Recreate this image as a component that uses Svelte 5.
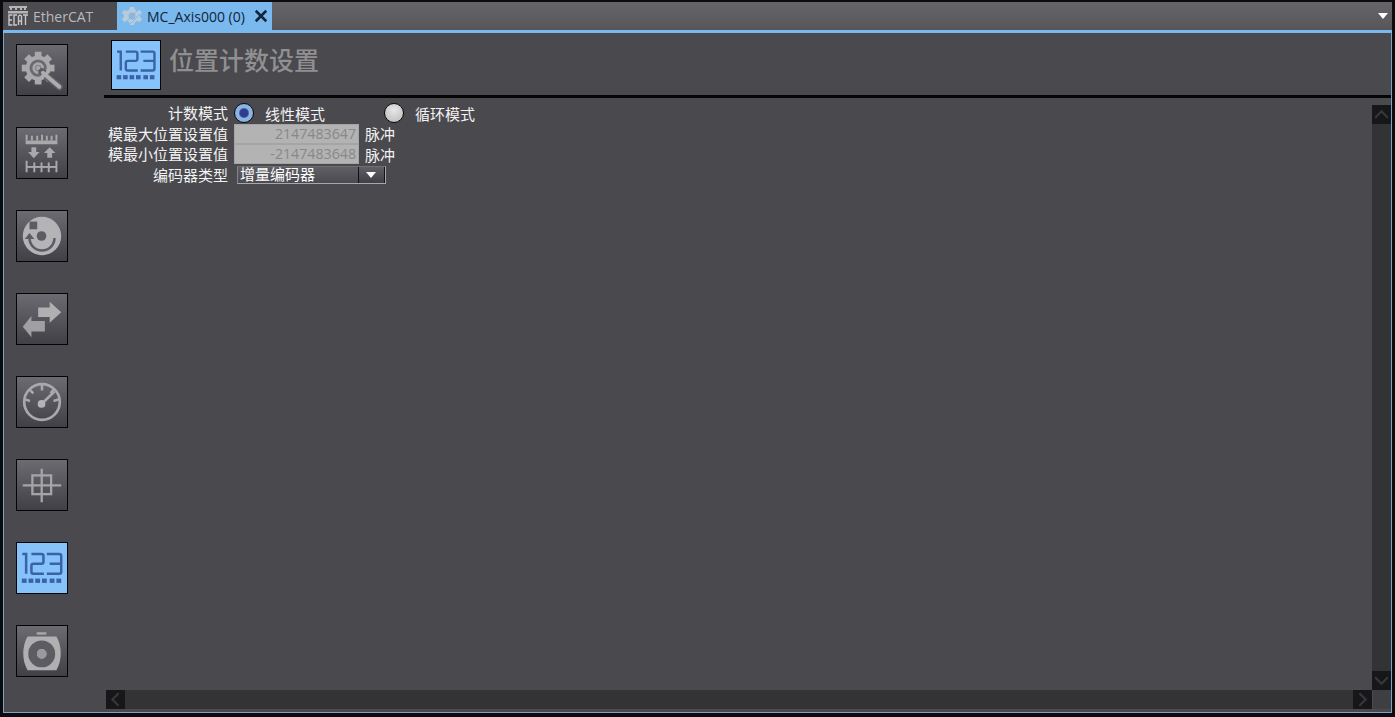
<script>
	const navItems = ['gear', 'scale', 'home', 'arrows', 'gauge', 'cross', 'count', 'knob'];
	const gearTeeth = [0, 45, 90, 135, 180, 225, 270, 315];
	let activeNav = $state('count');
	let countMode = $state('linear');
</script>

{#snippet countIcon()}
	<svg viewBox="0 0 52 52" class="nav-svg" aria-hidden="true">
		<g fill="none" stroke="#3a62a8" stroke-width="2.600">
			<path d="M5.500 11.500h4v20.500" />
			<path d="M15 11.500h10.500q2 0 2 2v6q0 2-2 2H17q-2 0-2 2v6.500q0 2 2 2h11" />
			<path d="M31 11.500h13q2 0 2 2v16.500q0 2-2 2H31M34 21.500h12" />
		</g>
		<g fill="#3a62a8">
			{#each [5, 12, 19, 26, 34, 41] as x}
				<rect {x} y="37" width="5" height="4.500" />
			{/each}
		</g>
	</svg>
{/snippet}

{#snippet navIcon(name)}
	{#if name === 'gear'}
		<svg viewBox="0 0 52 52" class="nav-svg" aria-hidden="true">
			<g fill="#a9a9ac">
				{#each gearTeeth as angle}
					<rect x="18.500" y="7" width="7" height="8" transform="rotate({angle} 22 24)" />
				{/each}
				<circle cx="22" cy="24" r="13" />
			</g>
			<circle cx="22" cy="24" r="7.500" fill="none" stroke="#6a6a72" stroke-width="3" />
			<circle cx="22" cy="24" r="2.800" fill="none" stroke="#85858a" stroke-width="1.400" />
			<path d="M26 28l18 15.500" stroke="#5c5c62" stroke-width="7.500" stroke-linecap="round" />
			<path d="M27 29l17 14.500" stroke="#adadb0" stroke-width="4.200" stroke-linecap="round" />
			<path d="M24.500 33a8 8 0 0 0 8-8" fill="none" stroke="#adadb0" stroke-width="3.200" />
		</svg>
	{:else if name === 'scale'}
		<svg viewBox="0 0 52 52" class="nav-svg" aria-hidden="true">
			<path fill="#a9a9ac" d="M9 13h33v4H9z" />
			<g stroke="#a9a9ac" stroke-width="2">
				<path d="M10 7v6M15.500 8v5M21 8v5M26 7v6M31 8v5M36 8v5M41 7v6" />
				<path d="M10 34v12M41 34v12M18 36v10M25.500 36v10M33 36v10" />
				<path d="M10 40.500h31" />
			</g>
			<path fill="#a9a9ac" d="M15 20h5v5h3.500l-6 6.500-6-6.500H15z" />
			<path fill="#a9a9ac" d="M31.500 31h5v-5h3.500l-6-6-6 6h3.500z" />
		</svg>
	{:else if name === 'home'}
		<svg viewBox="0 0 52 52" class="nav-svg" aria-hidden="true">
			<circle cx="26" cy="26" r="20" fill="#b4b4b7" />
			<rect x="13" y="11" width="8" height="8" fill="#5c5c62" />
			<circle cx="25.500" cy="26" r="5" fill="#5c5c62" />
			<path d="M13 28a13 13 0 0 0 26 0" fill="none" stroke="#5c5c62" stroke-width="2.600" />
			<path d="M8 29l5-6 5 6z" fill="#5c5c62" />
		</svg>
	{:else if name === 'arrows'}
		<svg viewBox="0 0 52 52" class="nav-svg" aria-hidden="true">
			<path fill="#b0b0b3" d="M22 14h12V8l12 11-12 11v-6H22z" />
			<path fill="#a0a0a3" d="M29 28H15v-5L6 34l9 11v-6h14z" />
		</svg>
	{:else if name === 'gauge'}
		<svg viewBox="0 0 52 52" class="nav-svg" aria-hidden="true">
			<circle cx="26" cy="26" r="18.500" fill="none" stroke="#a9a9ac" stroke-width="2.800" />
			<path d="M26 8v6M13 13l4 4M7.500 23l6 2M38 13l-3 4M44 23l-6 2" stroke="#a9a9ac" stroke-width="2.600" />
			<path d="M25.500 28L39 15" stroke="#a9a9ac" stroke-width="2.800" />
			<circle cx="25.500" cy="28" r="4" fill="#b4b4b7" />
		</svg>
	{:else if name === 'cross'}
		<svg viewBox="0 0 52 52" class="nav-svg" aria-hidden="true">
			<g fill="none" stroke="#a5a5a8" stroke-width="2.400">
				<rect x="16" y="16" width="19.500" height="19.500" />
				<path d="M6 26.300h40M25.700 9v35" />
			</g>
		</svg>
	{:else if name === 'knob'}
		<svg viewBox="0 0 52 52" class="nav-svg" aria-hidden="true">
			<rect x="20.500" y="6.500" width="10" height="2.500" fill="#a9a9ac" />
			<path fill="#b0b0b3" d="M11 11h30c6 10 6 25 0 35H11C5 36 5 21 11 11z" />
			<circle cx="25.700" cy="29" r="9.500" fill="none" stroke="#5c5c62" stroke-width="9" />
			<circle cx="25.700" cy="29" r="5" fill="#9a9a9d" />
		</svg>
	{/if}
{/snippet}

<div class="window">
	<div class="tabbar">
		<div class="tab">
			<svg viewBox="0 0 22 22" class="tab-icon" aria-hidden="true">
				<g fill="#b5b5b5">
					<rect x="2" y="1" width="18" height="2" />
					<path d="M3 3h2v2H3zM8 3h2v2H8zM13 3h2v2h-2zM17 3h2v2h-2z" />
					<rect x="1" y="6" width="20" height="2.500" />
				</g>
				<g fill="none" stroke="#c8c8c8" stroke-width="1.400">
					<path d="M5.500 10H2v10h3.500M2 15h3" />
					<path d="M10 10H7v10h3" />
					<path d="M11.500 20v-9l1.500-1 1.500 1v9M11.500 16h3" />
					<path d="M16 10h5M18.500 10v10" />
				</g>
			</svg>
			<span>EtherCAT</span>
		</div>
		<div class="tab tab-active">
			<svg viewBox="0 0 22 22" class="tab-icon" aria-hidden="true">
				<path fill="#b9cbdb" d="M9 2h4l1 3 2 1 3-1 2 3-2 2v2l2 2-2 3-3-1-2 1-1 3H9l-1-3-2-1-3 1-2-3 2-2v-2L1 8l2-3 3 1 2-1z" />
				<circle cx="11" cy="11" r="3.500" fill="#8fb6d8" />
				<path d="M5 17L17 5M9 19L19 9" stroke="#79b9ee" stroke-width="1" />
			</svg>
			<span>MC_Axis000 (0)</span>
			<button class="tab-close" aria-label="关闭">
				<svg viewBox="0 0 12 12" aria-hidden="true"><path d="M1.500 1.500l9 9M10.500 1.500l-9 9" stroke="#10243a" stroke-width="2.200" /></svg>
			</button>
		</div>
		<div class="tab-fill">
			<span class="tab-menu"></span>
		</div>
	</div>

	<div class="body">
		<nav class="sidebar">
			{#each navItems as item}
				<button class="nav-btn" class:active={activeNav === item} onclick={() => (activeNav = item)} aria-label={item}>
					{#if item === 'count'}
						{@render countIcon()}
					{:else}
						{@render navIcon(item)}
					{/if}
				</button>
			{/each}
		</nav>

		<main class="panel">
			<header class="panel-head">
				<div class="head-icon">{@render countIcon()}</div>
				<h1>位置计数设置</h1>
			</header>

			<div class="scroll-area">
				<div class="content">
					<form class="form">
						<span class="label">计数模式</span>
						<div class="radios">
							<label class="radio-item">
								<input type="radio" bind:group={countMode} value="linear" />
								<span class="radio" class:checked={countMode === 'linear'}></span>
								<span class="radio-text">线性模式</span>
							</label>
							<label class="radio-item">
								<input type="radio" bind:group={countMode} value="cycle" />
								<span class="radio" class:checked={countMode === 'cycle'}></span>
								<span class="radio-text">循环模式</span>
							</label>
						</div>

						<span class="label">模最大位置设置值</span>
						<div class="field">
							<div class="readonly">2147483647</div>
							<span class="unit">脉冲</span>
						</div>

						<span class="label">模最小位置设置值</span>
						<div class="field">
							<div class="readonly">-2147483648</div>
							<span class="unit">脉冲</span>
						</div>

						<span class="label">编码器类型</span>
						<div class="field">
							<div class="select">
								<span class="select-value">增量编码器</span>
								<span class="select-btn"></span>
							</div>
						</div>
					</form>
				</div>

				<div class="vscroll">
					<span class="sb-btn"><svg viewBox="0 0 18 18" aria-hidden="true"><path d="M3 12l6-6 6 6" /></svg></span>
					<span class="sb-track"></span>
					<span class="sb-btn"><svg viewBox="0 0 18 18" aria-hidden="true"><path d="M3 6l6 6 6-6" /></svg></span>
				</div>

				<div class="hscroll">
					<span class="sb-btn"><svg viewBox="0 0 18 18" aria-hidden="true"><path d="M12 3L6 9l6 6" /></svg></span>
					<span class="sb-track"></span>
					<span class="sb-btn"><svg viewBox="0 0 18 18" aria-hidden="true"><path d="M6 3l6 6-6 6" /></svg></span>
				</div>

				<div class="corner"></div>
			</div>
		</main>
	</div>
</div>

<style>
	:global(body) {
		margin: 0;
		background: #0c0c0e;
		overflow: hidden;
	}

	.window {
		box-sizing: border-box;
		width: 1395px;
		height: 717px;
		padding: 2px 3px 4px 3px;
		display: flex;
		flex-direction: column;
		font-family: "Open Sans", "Noto Sans CJK SC", sans-serif;
		font-size: 15px;
		color: #f2f2f2;
	}

	.tabbar {
		display: flex;
		height: 28px;
		flex: none;
		border-bottom: 3px solid #79b9ee;
	}

	.tab {
		display: flex;
		align-items: center;
		gap: 4px;
		width: 114px;
		box-sizing: border-box;
		padding-left: 4px;
		background: #4c4b50;
		color: #b9b9bb;
		font-size: 14px;
	}

	.tab-icon {
		width: 22px;
		height: 22px;
		flex: none;
	}

	.tab-active {
		width: 155px;
		background: #79b9ee;
		color: #10243a;
		gap: 4px;
	}

	.tab-close {
		width: 14px;
		height: 14px;
		margin-left: 5px;
		padding: 0;
		border: 0;
		background: none;
		display: flex;
	}

	.tab-fill {
		flex: 1;
		display: flex;
		align-items: center;
		justify-content: flex-end;
		padding-right: 4px;
		background: linear-gradient(#666569, #565559);
	}

	.tab-menu {
		width: 0;
		height: 0;
		border-left: 5px solid transparent;
		border-right: 5px solid transparent;
		border-top: 6px solid #fff;
	}

	.body {
		flex: 1;
		display: flex;
		min-height: 0;
		background: #4a494e;
		border: 1px solid #7ba3c7;
		border-top: 0;
	}

	.sidebar {
		width: 100px;
		flex: none;
		box-sizing: border-box;
		padding: 11px 0 0 12px;
		display: flex;
		flex-direction: column;
		gap: 31px;
	}

	.nav-btn {
		width: 52px;
		height: 52px;
		padding: 0;
		box-sizing: border-box;
		border: 1px solid #050505;
		background: linear-gradient(#6b6b71, #404046);
		display: block;
	}

	.nav-btn.active {
		background: #86c3fb;
	}

	.nav-svg {
		display: block;
		width: 100%;
		height: 100%;
	}

	.panel {
		flex: 1;
		min-width: 0;
		display: flex;
		flex-direction: column;
	}

	.panel-head {
		height: 65px;
		flex: none;
		box-sizing: border-box;
		padding: 7px 0 0 7px;
		display: flex;
		gap: 8px;
		border-bottom: 3px solid #050505;
	}

	.head-icon {
		width: 50px;
		height: 50px;
		box-sizing: border-box;
		border: 1px solid #050505;
		background: #86c3fb;
	}

	h1 {
		margin: 0;
		font-size: 25px;
		font-weight: 500;
		line-height: 40px;
		color: #909093;
	}

	.scroll-area {
		flex: 1;
		min-height: 0;
		display: grid;
		grid-template-columns: 1fr 19px;
		grid-template-rows: 1fr 19px;
		padding: 5px 0 3px 2px;
	}

	.content {
		min-width: 0;
		overflow: hidden;
	}

	.form {
		display: grid;
		grid-template-columns: 122px 1fr;
		grid-auto-rows: 20.500px;
		column-gap: 6px;
		align-items: center;
	}

	.label {
		text-align: right;
		white-space: nowrap;
		line-height: 20px;
	}

	.radios {
		display: flex;
		align-items: center;
		gap: 59px;
	}

	.radio-item {
		display: flex;
		align-items: center;
		gap: 11px;
		width: 91px;
	}

	.radio-item input {
		display: none;
	}

	.radio {
		width: 20px;
		height: 20px;
		box-sizing: border-box;
		border-radius: 50%;
		border: 1px solid #0a0a0a;
		background: radial-gradient(circle at 50% 35%, #e6e6e6, #b9b9b9);
		flex: none;
	}

	.radio.checked {
		background: radial-gradient(circle, #2c3f8f 0 4px, #8fb4de 5.500px, #7db6ec 100%);
	}

	.radio-text {
		white-space: nowrap;
	}

	.field {
		display: flex;
		align-items: center;
		gap: 6px;
	}

	.readonly {
		width: 125px;
		height: 20px;
		box-sizing: border-box;
		padding-right: 2px;
		background: #b3b3b3;
		border: 1px solid #a5a5a5;
		color: #888;
		text-align: right;
		line-height: 18px;
		font-size: 14.200px;
	}

	.unit {
		white-space: nowrap;
	}

	.select {
		width: 149px;
		height: 18px;
		margin-left: 3px;
		box-sizing: border-box;
		display: flex;
		background: linear-gradient(#5f5f65, #4a4a50);
		border: 1px solid #a8a8ac;
		border-left-color: #85858a;
		border-top-color: #6f6f74;
	}

	.select-value {
		flex: 1;
		padding-left: 2px;
		line-height: 15px;
		color: #fff;
	}

	.select-btn {
		width: 25px;
		position: relative;
		background: linear-gradient(#5f5f65, #3f3f45);
		border-left: 1px solid #111;
		border-right: 1px solid #111;
	}

	.select-btn::after {
		content: "";
		position: absolute;
		left: 7px;
		top: 5px;
		border-left: 5px solid transparent;
		border-right: 5px solid transparent;
		border-top: 6px solid #fff;
	}

	.vscroll,
	.hscroll {
		display: flex;
		background: #38383b;
	}

	.vscroll {
		flex-direction: column;
		margin-top: 2px;
	}

	.sb-track {
		flex: 1;
		background: #333336;
	}

	.sb-btn {
		flex: none;
		width: 19px;
		height: 19px;
		background: #17171a;
		display: block;
	}

	.sb-btn svg {
		display: block;
		width: 100%;
		height: 100%;
		fill: none;
		stroke: #38383c;
		stroke-width: 2;
	}

	.corner {
		background: #3f3e42;
		margin-left: 1px;
	}
</style>
